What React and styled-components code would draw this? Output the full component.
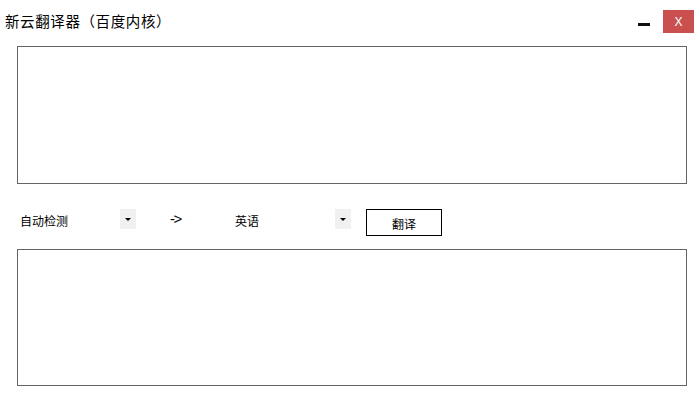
import React from "react";
import styled, { createGlobalStyle } from "styled-components";

const Global = createGlobalStyle`
  html, body { margin: 0; padding: 0; background: #ffffff; }
  body { font-family: "Noto Sans CJK SC", "Noto Sans", sans-serif; color: #000; }
`;

const Window = styled.div`
  width: 694px;
  height: 405px;
  display: flex;
  flex-direction: column;
  background: #fff;
  overflow: hidden;
`;

const TitleBar = styled.div`
  height: 46px;
  box-sizing: border-box;
  padding: 10px 0 0 5px;
  display: flex;
  align-items: flex-start;
`;

const Title = styled.div`
  flex: 1;
  font-size: 14.5px;
  line-height: 22px;
  letter-spacing: 0.6px;
`;

const Controls = styled.div`
  display: flex;
  align-items: flex-start;
  gap: 13px;
`;

const MinButton = styled.div`
  width: 12px;
  height: 23px;
  display: flex;
  align-items: flex-end;
  padding-bottom: 7px;
  box-sizing: border-box;
  &::after {
    content: "";
    display: block;
    width: 12px;
    height: 3px;
    background: #111;
  }
`;

const CloseButton = styled.div`
  width: 31px;
  height: 23px;
  background: #c9504f;
  color: #fff;
  font-family: "Liberation Sans", sans-serif;
  font-size: 12px;
  display: flex;
  align-items: center;
  justify-content: center;
`;

const Body = styled.div`
  padding: 0 7px 0 17px;
  display: flex;
  flex-direction: column;
`;

const TextBox = styled.textarea`
  display: block;
  box-sizing: border-box;
  width: 670px;
  height: ${(p) => p.$h}px;
  border: 1px solid #646464;
  margin: 0;
  padding: 2px;
  resize: none;
  outline: none;
  font-family: "Noto Sans CJK SC", sans-serif;
  font-size: 12px;
`;

const Row = styled.div`
  display: flex;
  align-items: flex-start;
  margin: 25px 0 13px;
  height: 27px;
`;

const Select = styled.div`
  width: 119px;
  height: 20px;
  display: flex;
  align-items: center;
  justify-content: space-between;
  margin-left: ${(p) => p.$ml || 0}px;
`;

const SelectText = styled.span`
  padding-left: 3px;
  padding-top: 3px;
  font-size: 12px;
  line-height: 20px;
`;

const Arrow = styled.span`
  width: 16px;
  height: 20px;
  background: #f0f0f0;
  display: flex;
  align-items: center;
  justify-content: center;
  &::after {
    content: "";
    width: 0;
    height: 0;
    border-left: 3px solid transparent;
    border-right: 3px solid transparent;
    border-top: 3px solid #000;
  }
`;

const Direction = styled.span`
  margin-left: 34px;
  width: 17px;
  font-family: "Liberation Sans", sans-serif;
  font-size: 15px;
  line-height: 20px;
  letter-spacing: -1.5px;
  white-space: nowrap;
`;

const Button = styled.button`
  margin-left: 15px;
  width: 76px;
  height: 27px;
  box-sizing: border-box;
  border: 1px solid #000;
  background: #fff;
  padding: 2px 0 0;
  font-family: "Noto Sans CJK SC", sans-serif;
  font-size: 12px;
  color: #000;
`;

export default function App() {
  return (
    <Window>
      <Global />
      <TitleBar>
        <Title>新云翻译器（百度内核）</Title>
        <Controls>
          <MinButton />
          <CloseButton>X</CloseButton>
        </Controls>
      </TitleBar>
      <Body>
        <TextBox $h={138} />
        <Row>
          <Select>
            <SelectText>自动检测</SelectText>
            <Arrow />
          </Select>
          <Direction>-&gt;</Direction>
          <Select $ml={45}>
            <SelectText>英语</SelectText>
            <Arrow />
          </Select>
          <Button>翻译</Button>
        </Row>
        <TextBox $h={137} />
      </Body>
    </Window>
  );
}
